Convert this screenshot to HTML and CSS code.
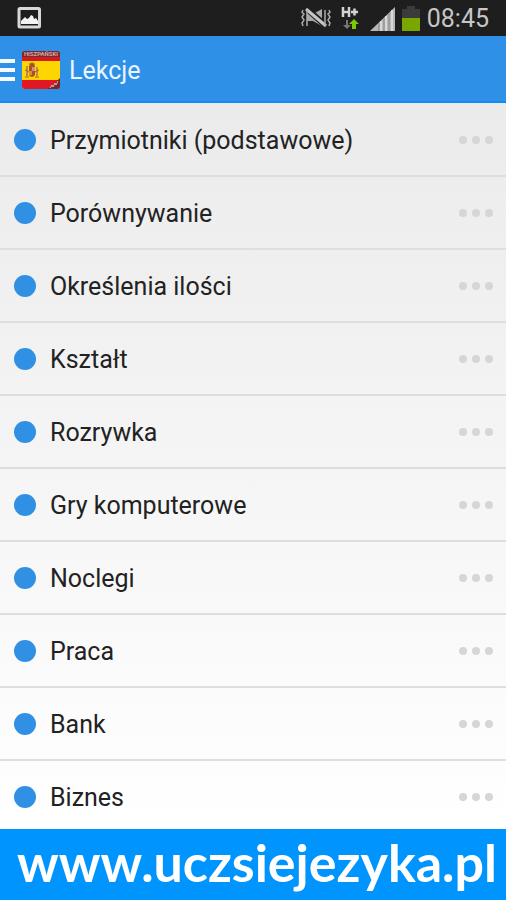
FILE: index.html
```html
<!DOCTYPE html>
<html lang="pl">
<head>
<meta charset="utf-8">
<meta name="viewport" content="width=device-width, initial-scale=1">
<title>Lekcje</title>
<link rel="stylesheet" href="styles.css">
</head>
<body>
<div class="status">
  <svg class="status-picture" width="24" height="22" viewBox="0 0 24 22" aria-hidden="true">
    <rect x="2" y="1.500" width="20.500" height="18.500" rx="1" fill="#1e1e1e" stroke="#d8d8d8" stroke-width="3"/>
    <path d="M4 17v-3l4-4 2 2 2-1 2-3 2 1 1 3 2-1 2 3v3z" fill="#f4f4f4"/>
  </svg>
  <div class="status-right">
    <svg width="30" height="22" viewBox="0 0 30 22" aria-hidden="true">
      <path d="M6 7h6l9-5v17l-9-5H6z" fill="#a8a8a8"/>
      <path d="M5 1l20 18" stroke="#1e1e1e" stroke-width="6"/>
      <path d="M5 2l20 17" stroke="#c6c6c6" stroke-width="3"/>
      <path d="M2 3l-1 2 2 2-2 3 2 3-2 3 1 3M6 3v16M28 3l1 2-2 2 2 3-2 3 2 3-1 3M24 3v16" fill="none" stroke="#aaa" stroke-width="1.500"/>
    </svg>
    <svg width="18" height="26" viewBox="0 0 18 26" aria-hidden="true">
      <path d="M2 2v10M8 2v10M2 7h6M10 7h7M13.500 3.500v7" fill="none" stroke="#d2d2d2" stroke-width="2.500"/>
      <path d="M5 15h2v5h3l-4 4-4-4h3z" fill="#777"/>
      <path d="M13 14l5 5h-3v5h-4v-5H8z" fill="#7dc900"/>
    </svg>
    <svg width="26" height="26" viewBox="0 0 26 26" aria-hidden="true">
      <path d="M0 26L25 2v24z" fill="#b7b7b7"/>
      <path d="M9 18v8M14 13v13M19 8v18" stroke="#858585"/>
      <path d="M11 16v10M16 11v15M22 5v21" stroke="#d8d8d8" stroke-width="2"/>
    </svg>
    <svg width="18" height="26" viewBox="0 0 18 26" aria-hidden="true">
      <path d="M5 1h8v3h5v9H0V4h5z" fill="#3b3b3b"/>
      <path d="M0 13h18v13H0z" fill="#78a800"/>
    </svg>
    <time class="clock">08:45</time>
  </div>
</div>
<header class="bar">
  <button class="menu" aria-label="Menu"><span></span><span></span><span></span></button>
  <svg class="flag" width="40" height="40" viewBox="0 0 40 40" aria-hidden="true">
    <defs><clipPath id="round"><rect x="1" y="1" width="38" height="38" rx="3"/></clipPath></defs>
    <g clip-path="url(#round)">
      <rect width="40" height="40" fill="#fdd500"/>
      <rect width="40" height="11" fill="#d51921"/>
      <rect width="40" height="7" fill="#762b2d"/>
      <rect y="30" width="40" height="10" fill="#df1821"/>
      <path d="M26 40l14-13v13z" fill="#842126"/>
      <path d="M29 38l2-3 1 2 2-4 1 2 2-4" fill="none" stroke="#d9b7b1"/>
      <path d="M6 16v10M16 17v9" stroke="#bb8f42" stroke-width="2"/>
      <path d="M4 20l4 2M14 22l4-2M4 27h4M14 27h4" stroke="#b85734"/>
      <path d="M8 16q3-5 6 0v9q-3 4-6 0z" fill="#b34b27"/>
      <path d="M11 17h3v4h-3z" fill="#c99291"/>
      <path d="M8 21h3v4H8z" fill="#d99328"/>
      <path d="M8 14h6M11 12v3" stroke="#78502c"/>
      <text class="flag-text" x="20" y="6" text-anchor="middle">HISZPAŃSKI</text>
    </g>
  </svg>
  <h1 class="title">Lekcje</h1>
</header>
<main class="content">
  <ul class="list">
    <li class="row"><a class="lesson" href="#">Przymiotniki (podstawowe)</a><button class="more" aria-label="Więcej"><span></span><span></span><span></span></button></li>
    <li class="row"><a class="lesson" href="#">Porównywanie</a><button class="more" aria-label="Więcej"><span></span><span></span><span></span></button></li>
    <li class="row"><a class="lesson" href="#">Określenia ilości</a><button class="more" aria-label="Więcej"><span></span><span></span><span></span></button></li>
    <li class="row"><a class="lesson" href="#">Kształt</a><button class="more" aria-label="Więcej"><span></span><span></span><span></span></button></li>
    <li class="row"><a class="lesson" href="#">Rozrywka</a><button class="more" aria-label="Więcej"><span></span><span></span><span></span></button></li>
    <li class="row"><a class="lesson" href="#">Gry komputerowe</a><button class="more" aria-label="Więcej"><span></span><span></span><span></span></button></li>
    <li class="row"><a class="lesson" href="#">Noclegi</a><button class="more" aria-label="Więcej"><span></span><span></span><span></span></button></li>
    <li class="row"><a class="lesson" href="#">Praca</a><button class="more" aria-label="Więcej"><span></span><span></span><span></span></button></li>
    <li class="row"><a class="lesson" href="#">Bank</a><button class="more" aria-label="Więcej"><span></span><span></span><span></span></button></li>
    <li class="row"><a class="lesson" href="#">Biznes</a><button class="more" aria-label="Więcej"><span></span><span></span><span></span></button></li>
  </ul>
</main>
<footer class="banner"><a href="#">www.uczsiejezyka.pl</a></footer>
</body>
</html>
```
FILE: styles.css
```css
* {
  box-sizing: border-box;
}

body {
  margin: 0;
  height: 100vh;
  display: flex;
  flex-direction: column;
  font-family: Roboto, "Liberation Sans", sans-serif;
  color: #222;
}

a {
  color: inherit;
  text-decoration: none;
}

button {
  border: 0;
  padding: 0;
  background: none;
}

.status {
  flex: none;
  height: 36px;
  padding: 0 17px;
  display: flex;
  align-items: center;
  justify-content: space-between;
  background: #1e1e1e;
}

.status-right {
  display: flex;
  align-items: center;
  gap: 6px;
}

.status-right svg:nth-child(2) {
  margin: 0 5px 0 4px;
}

.clock {
  padding: 2px 0 0 1px;
  font-size: 25px;
  line-height: 34px;
  color: #c6c6c6;
}

.bar {
  flex: none;
  height: 67px;
  padding-top: 2px;
  display: flex;
  align-items: center;
  background: #2f90e7;
  border-bottom: 2px solid #168bec;
}

.menu {
  width: 15px;
  margin-right: 6px;
  display: grid;
  gap: 5px;
}

.menu span {
  height: 4px;
  background: #f4faff;
}

.flag-text {
  font: 700 6px Roboto, sans-serif;
  fill: #d3a7a5;
}

.title {
  margin: 0 0 0 8px;
  padding-top: 2px;
  font-size: 25px;
  line-height: 32px;
  font-weight: 400;
  color: #e9f5ff;
}

.content {
  flex: 1;
  min-height: 0;
  overflow: hidden;
  border-top: 1px solid #dcecfa;
  background: linear-gradient(#ebebeb, #fff);
}

.list {
  margin: 0;
  padding: 0;
  list-style: none;
}

.row {
  height: 73px;
  padding: 0 13px 0 14px;
  display: flex;
  align-items: center;
  border-bottom: 2px solid #dedede;
}

.row::before {
  content: "";
  width: 22px;
  height: 22px;
  margin-right: 14px;
  border-radius: 50%;
  background: #2f90e4;
}

.lesson {
  flex: 1;
  font-size: 25px;
  line-height: 32px;
  padding-top: 2px;
}

.more {
  display: flex;
  gap: 5px;
}

.more span {
  width: 8px;
  height: 8px;
  border-radius: 50%;
  background: #d6d6d6;
}

.banner {
  flex: none;
  height: 71px;
  padding-left: 8px;
  background: #0094ff;
  color: #fff;
  font-family: Lato, "Open Sans", sans-serif;
  font-weight: 700;
  font-size: 52px;
  line-height: 66px;
  text-align: center;
  white-space: nowrap;
}
```
